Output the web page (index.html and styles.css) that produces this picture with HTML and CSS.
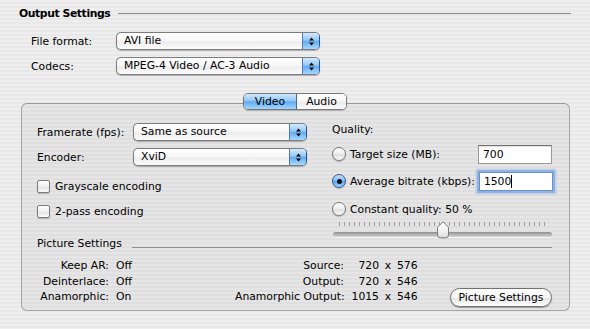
FILE: index.html
```html
<!DOCTYPE html>
<html>
<head>
<meta charset="utf-8">
<link rel="stylesheet" href="styles.css">
</head>
<body>
<div class="window">
  <div class="heading"><span>Output Settings</span><span class="rule"></span></div>
  <div class="form">
    <span class="lbl">File format:</span>
    <div class="popup w204"><span class="val">AVI file</span><span class="arr"><svg width="7" height="11" viewBox="0 0 7 11"><path d="M3.5 1.5 L6 4.5 H1Z M1 6.5 H6 L3.5 9.5Z" fill="#000"/></svg></span></div>
    <span class="lbl">Codecs:</span>
    <div class="popup w204"><span class="val">MPEG-4 Video / AC-3 Audio</span><span class="arr"><svg width="7" height="11" viewBox="0 0 7 11"><path d="M3.5 1.5 L6 4.5 H1Z M1 6.5 H6 L3.5 9.5Z" fill="#000"/></svg></span></div>
  </div>

  <div class="tabs">
    <div class="seg"><span class="on">Video</span><span class="off">Audio</span></div>
  </div>

  <div class="group">
    <div class="cols">
      <div class="left">
        <div class="frow"><span>Framerate (fps):</span>
          <div class="popup"><span class="val">Same as source</span><span class="arr"><svg width="7" height="11" viewBox="0 0 7 11"><path d="M3.5 1.5 L6 4.5 H1Z M1 6.5 H6 L3.5 9.5Z" fill="#000"/></svg></span></div>
        </div>
        <div class="frow"><span>Encoder:</span>
          <div class="popup"><span class="val">XviD</span><span class="arr"><svg width="7" height="11" viewBox="0 0 7 11"><path d="M3.5 1.5 L6 4.5 H1Z M1 6.5 H6 L3.5 9.5Z" fill="#000"/></svg></span></div>
        </div>
        <div class="check first"><span class="box"></span><span>Grayscale encoding</span></div>
        <div class="check"><span class="box"></span><span>2-pass encoding</span></div>
      </div>
      <div class="right">
        <div class="qlabel">Quality:</div>
        <div class="rrow"><span class="radio"></span><span class="rl">Target size (MB):</span><span class="input">700</span></div>
        <div class="rrow"><span class="radio on"><span class="dot"></span></span><span class="rl">Average bitrate (kbps):</span><span class="input focus"><span class="caret">1500</span></span></div>
        <div class="rrow third"><span class="radio"></span><span class="rl">Constant quality: 50 %</span></div>
        <div class="slider">
          <div class="ticks"></div>
          <div class="track"></div>
          <svg class="knob" width="14" height="18" viewBox="0 0 14 18">
            <defs><linearGradient id="kg" x1="0" y1="0" x2="0" y2="1"><stop offset="0" stop-color="#ffffff"/><stop offset="0.6" stop-color="#f0f0f0"/><stop offset="1" stop-color="#d8d8d8"/></linearGradient></defs>
            <path d="M7 0.8 L12.5 6.3 V14 Q12.5 16.8 9.7 16.8 H4.3 Q1.5 16.8 1.5 14 V6.3 Z" fill="url(#kg)" stroke="#7a7a7a" stroke-width="1"/>
          </svg>
        </div>
      </div>
    </div>

    <div class="sub"><span>Picture Settings</span><span class="rule"></span></div>

    <div class="pic">
      <div class="pic-left">
        <span class="pl">Keep AR:</span><span>Off</span>
        <span class="pl">Deinterlace:</span><span>Off</span>
        <span class="pl">Anamorphic:</span><span>On</span>
      </div>
      <div class="pic-right">
        <span class="pl">Source:</span><span class="num">720</span><span class="x">x</span><span>576</span>
        <span class="pl">Output:</span><span class="num">720</span><span class="x">x</span><span>546</span>
        <span class="pl">Anamorphic Output:</span><span class="num">1015</span><span class="x">x</span><span>546</span>
      </div>
      <div class="btn">Picture Settings</div>
    </div>
  </div>
</div>
</body>
</html>
```

FILE: styles.css
```css
* { box-sizing: border-box; }

body {
  margin: 0;
  width: 590px;
  height: 329px;
  overflow: hidden;
  font-family: "DejaVu Sans", sans-serif;
  font-size: 10.8px;
  color: #000;
  background: repeating-linear-gradient(to bottom, #eeeeee 0, #eeeeee 2px, #e8e8e8 2px, #e8e8e8 4px);
}

.window {
  padding: 6px 19px 0 19px;
}

.heading {
  display: flex;
  align-items: center;
  height: 14px;
  font-weight: bold;
  letter-spacing: -0.4px;
}

.heading .rule {
  flex: 1;
  height: 1px;
  background: #8a8a8a;
  margin-left: 8px;
}

.form {
  margin-top: 12px;
  padding-left: 12px;
  display: grid;
  grid-template-columns: 85px 204px;
  row-gap: 7px;
  align-items: center;
}

.popup {
  height: 18px;
  display: flex;
  border: 1px solid #7c7c7c;
  border-right-color: #2d4f8c;
  border-radius: 5px;
  overflow: hidden;
  box-shadow: 0 1px 1px rgba(0, 0, 0, 0.25);
  background: linear-gradient(#ffffff, #f6f6f6 50%, #ececec 55%, #fbfbfb);
}

.popup .val {
  flex: 1;
  padding-left: 7px;
  line-height: 16px;
  white-space: nowrap;
}

.popup .arr {
  width: 17px;
  border-left: 1px solid #4f77b4;
  background: linear-gradient(#d4eafd, #95c8f6 45%, #62abf0 52%, #a6d9ff);
  display: flex;
  align-items: center;
  justify-content: center;
}

.tabs {
  margin-top: 18px;
  display: flex;
  justify-content: center;
  position: relative;
  z-index: 1;
}

.seg {
  display: flex;
  height: 17px;
  border: 1px solid #777;
  border-radius: 5px;
  overflow: hidden;
  box-shadow: 0 1px 1px rgba(0, 0, 0, 0.2);
}

.seg span {
  line-height: 15px;
  text-align: center;
}

.seg .on {
  width: 53px;
  border-right: 1px solid #4a6a9c;
  background: linear-gradient(#cde6fc, #93c7f6 45%, #62aaf0 52%, #a3d6ff);
}

.seg .off {
  width: 49px;
  background: linear-gradient(#ffffff, #f6f6f6 50%, #ebebeb 55%, #fbfbfb);
}

.group {
  margin: -7px 0 0 2px;
  width: 549px;
  height: 208px;
  border: 1px solid #a4a4a4;
  border-top-color: #979797;
  border-radius: 6px;
  background: rgba(0, 0, 0, 0.035);
  padding: 19px 17px 0 15px;
}

.cols {
  display: flex;
  gap: 25px;
}

.left {
  width: 270px;
  display: flex;
  flex-direction: column;
  gap: 7px;
}

.frow {
  display: grid;
  grid-template-columns: 96px 174px;
  align-items: center;
  height: 18px;
}

.check {
  display: flex;
  align-items: center;
  gap: 5px;
  height: 18px;
}

.check.first {
  margin-top: 4px;
}

.box {
  width: 13px;
  height: 13px;
  border: 1px solid #7b7b7b;
  border-radius: 2px;
  background: linear-gradient(#fdfdfd, #f0f0f0 50%, #e4e4e4 55%, #fafafa);
  box-shadow: 0 1px 1px rgba(0, 0, 0, 0.2);
}

.right {
  width: 220px;
  display: flex;
  flex-direction: column;
}

.qlabel {
  height: 14px;
  line-height: 14px;
  margin-bottom: 7px;
}

.rrow {
  display: flex;
  align-items: center;
  gap: 4px;
  height: 20px;
  margin-bottom: 7px;
}

.rl {
  white-space: nowrap;
}

.rrow.third {
  margin-top: 1px;
  margin-bottom: 1px;
}

.radio {
  width: 14px;
  height: 14px;
  border-radius: 50%;
  border: 1px solid #777;
  background: linear-gradient(#fefefe, #eeeeee 50%, #e0e0e0 55%, #fafafa);
  box-shadow: 0 1px 1px rgba(0, 0, 0, 0.2);
  display: flex;
  align-items: center;
  justify-content: center;
  flex: none;
}

.radio.on {
  border-color: #35578f;
  background: linear-gradient(#c4e0fb, #86bff5 45%, #5aa5ef 52%, #9fd4ff);
}

.dot {
  width: 5px;
  height: 5px;
  border-radius: 50%;
  background: #111;
}

.input {
  margin-left: auto;
  flex: none;
  width: 74px;
  height: 19px;
  border: 1px solid #9a9a9a;
  border-top-color: #707070;
  background: #fff;
  box-shadow: inset 0 1px 1px rgba(0, 0, 0, 0.12);
  padding-left: 4px;
  line-height: 17px;
}

.input.focus {
  box-shadow: 0 0 0 2px #8db3e6, 0 0 2px 3px rgba(120, 160, 220, 0.4);
  border-color: #6c8fc4;
}

.caret {
  border-right: 1px solid #000;
}

.slider {
  position: relative;
  height: 17px;
}

.ticks {
  margin: 2px 0 0 7px;
  width: 208px;
  height: 4px;
  background: repeating-linear-gradient(to right, #9c9c9c 0, #9c9c9c 1px, transparent 1px, transparent 5px);
}

.track {
  margin-top: 6px;
  margin-left: 1px;
  width: 219px;
  height: 5px;
  border-radius: 3px;
  background: linear-gradient(#8e8e8e, #b9b9b9 60%, #d6d6d6);
  box-shadow: 0 1px 0 rgba(255, 255, 255, 0.6);
}

.knob {
  position: absolute;
  left: 104px;
  top: 1px;
}

.sub {
  display: flex;
  align-items: center;
  height: 13px;
}

.sub .rule {
  flex: 1;
  height: 1px;
  background: #8e8e8e;
  margin: 7px 0 0 10px;
}

.pic {
  margin-top: 8px;
  display: flex;
  line-height: 15.5px;
}

.pic-left {
  width: 198px;
  display: grid;
  grid-template-columns: 72px auto;
  column-gap: 7px;
  align-content: start;
}

.pl {
  text-align: right;
  white-space: nowrap;
}

.pic-right {
  display: grid;
  grid-template-columns: 109px 35px 18px auto;
  align-content: start;
}

.num {
  text-align: right;
}

.x {
  text-align: center;
}

.btn {
  margin-left: auto;
  align-self: flex-end;
  margin-bottom: -2.5px;
  width: 102px;
  height: 19px;
  border: 1px solid #717171;
  border-radius: 10px;
  background: linear-gradient(#ffffff, #f4f4f4 50%, #e6e6e6 55%, #fdfdfd);
  box-shadow: 0 1px 1px rgba(0, 0, 0, 0.3);
  text-align: center;
  line-height: 17px;
}
```
